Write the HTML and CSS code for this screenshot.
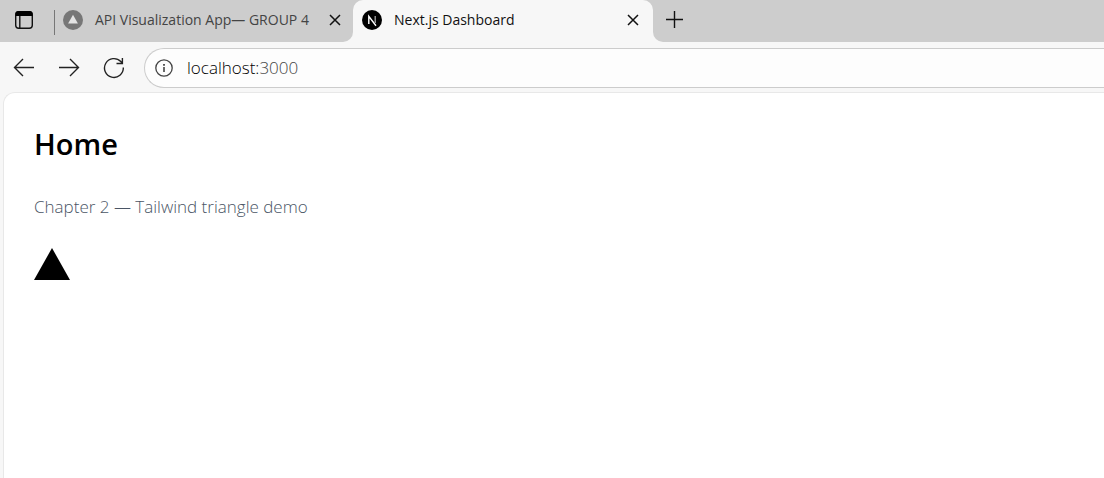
FILE: index.html
```html
<!DOCTYPE html>
<html lang="en">
<head>
<meta charset="utf-8">
<meta name="viewport" content="width=device-width, initial-scale=1">
<title>Next.js Dashboard</title>
<link rel="stylesheet" href="styles.css">
</head>
<body>
<div class="browser">
  <header class="tab-strip">
    <div class="strip-start">
      <button class="icon-button tab-actions" aria-label="Tab actions menu">
        <svg width="20" height="20" viewBox="0 0 20 20" fill="none" stroke="#111" stroke-width="1.4"><rect x="1.7" y="1.7" width="16.6" height="16.6" rx="3"/><path d="M5.8 5.5v12.5"/><path d="M1.5 6V4a3 3 0 0 1 3-3h11a3 3 0 0 1 3 3v2z" fill="#000" stroke="none"/></svg>
      </button>
      <span class="divider"></span>
      <div class="tab">
        <svg class="favicon" width="20" height="20" viewBox="0 0 20 20"><circle cx="10" cy="10" r="10" fill="#777"/><path d="M10 4.8l4.9 8.7H5.1z" fill="#e4e4e4"/></svg>
        <span class="tab-title">API Visualization App— GROUP 4</span>
        <button class="icon-button close" aria-label="Close tab"><svg width="12" height="12" viewBox="0 0 12 12" fill="none" stroke="#111" stroke-width="1.5"><path d="M1 1l10 10M11 1L1 11"/></svg></button>
      </div>
    </div>
    <div class="tab tab-active">
      <svg class="favicon" width="20" height="20" viewBox="0 0 20 20"><circle cx="10" cy="10" r="10" fill="#000"/><path d="M6.8 14V6.3l7.2 9.4" fill="none" stroke="#fff" stroke-width="1.4"/><path d="M13.2 6v7" stroke="#aaa" stroke-width="1.3"/></svg>
      <span class="tab-title">Next.js Dashboard</span>
      <button class="icon-button close" aria-label="Close tab"><svg width="12" height="12" viewBox="0 0 12 12" fill="none" stroke="#111" stroke-width="1.5"><path d="M1 1l10 10M11 1L1 11"/></svg></button>
    </div>
    <div class="strip-end">
      <button class="icon-button" aria-label="New tab"><svg width="18" height="18" viewBox="0 0 18 18" fill="none" stroke="#111" stroke-width="1.4"><path d="M9.5 1v17M1 9.5h17"/></svg></button>
    </div>
  </header>
  <nav class="toolbar">
    <button class="icon-button" aria-label="Back"><svg width="22" height="20" viewBox="0 0 22 20" fill="none" stroke="#222" stroke-width="1.4"><path d="M21 9.5H1.5M10 1L1.5 9.5l8.5 8.5"/></svg></button>
    <button class="icon-button" aria-label="Forward"><svg width="22" height="20" viewBox="0 0 22 20" fill="none" stroke="#222" stroke-width="1.4"><path d="M1 9.5h19.5M12 1l8.5 8.5-8.5 8.5"/></svg></button>
    <button class="icon-button" aria-label="Refresh"><svg width="22" height="22" viewBox="0 0 22 22" fill="none" stroke="#222" stroke-width="1.4"><path d="M20.3 10.5A9.4 9.4 0 1 1 17.8 4.6L19.4 6.3M19.4 1v5.5H13.5"/></svg></button>
    <div class="address">
      <button class="icon-button" aria-label="View site information"><svg width="18" height="18" viewBox="0 0 18 18" fill="none" stroke="#444" stroke-width="1.3"><circle cx="9" cy="9" r="8.2"/><path d="M9 8v5" stroke-width="1.6"/><path d="M9 5v1.8" stroke-width="1.8"/></svg></button>
      <span class="url" aria-label="Address">localhost:<span class="port">3000</span></span>
    </div>
  </nav>
  <main class="page">
    <h1>Home</h1>
    <p>Chapter 2 — Tailwind triangle demo</p>
    <div class="triangle"></div>
  </main>
</div>
</body>
</html>
```
FILE: styles.css
```css
* {
  box-sizing: border-box;
}

body {
  margin: 0;
  background: #f7f7f7;
  color: #000;
  font-family: "Segoe UI", "Open Sans", "Noto Sans", sans-serif;
}

.browser {
  display: flex;
  flex-direction: column;
  min-height: 100vh;
}

.icon-button {
  display: flex;
  flex: none;
  padding: 0;
  border: 0;
  background: none;
}

.tab-strip {
  display: flex;
  height: 42px;
  background: linear-gradient(#cdcdcd 50%, #f7f7f7 50%);
}

.strip-start {
  display: flex;
  align-items: center;
  flex: 0 0 353px;
  padding-left: 14px;
  padding-bottom: 2px;
  background: #cdcdcd;
  border-bottom-right-radius: 10px;
}

.divider {
  width: 1px;
  height: 25px;
  margin-top: 4px;
  margin-left: 20px;
  background: #777;
}

.tab {
  display: flex;
  flex: 1;
  align-items: center;
  padding: 0 12px 0 8px;
  color: #444;
  font-size: 14px;
  line-height: 20px;
  white-space: nowrap;
}

.favicon {
  flex: none;
}

.tab-title {
  margin-left: 12px;
}

.close {
  margin-left: auto;
}

.tab-active {
  flex: 0 0 300px;
  padding: 0 14px 2px 9px;
  background: #f7f7f7;
  border-radius: 10px 10px 0 0;
  color: #111;
}

.strip-end {
  display: flex;
  flex: 1;
  align-items: center;
  padding: 0 0 4px 12px;
  background: #cdcdcd;
  border-bottom-left-radius: 10px;
}

.toolbar {
  display: flex;
  align-items: center;
  gap: 23px;
  padding: 6px 0 4px 13px;
}

.address {
  display: flex;
  flex: 1;
  align-items: center;
  gap: 14px;
  height: 40px;
  margin-left: -4px;
  padding-left: 10px;
  border: 1px solid #ccc;
  border-right: 0;
  border-radius: 20px 0 0 20px;
  background: #fdfdfd;
}

.url {
  color: #000;
  font-size: 17px;
  font-weight: 350;
  line-height: 24px;
}

.port {
  color: #444;
}

.page {
  flex: 1;
  margin-left: 3px;
  padding: 31px 30px;
  border: 1px solid #e8e8e8;
  border-width: 1px 0 0 1px;
  border-top-left-radius: 12px;
  background: #fff;
}

h1 {
  margin: 0 0 27px;
  font-size: 29px;
  font-weight: 600;
  line-height: 40px;
}

p {
  margin: 0 0 25px;
  color: #4a5565;
  font-size: 17px;
  font-weight: 350;
  line-height: 32px;
}

.triangle {
  width: 36px;
  height: 32px;
  background: #000;
  clip-path: polygon(50% 0, 100% 100%, 0 100%);
}
```
